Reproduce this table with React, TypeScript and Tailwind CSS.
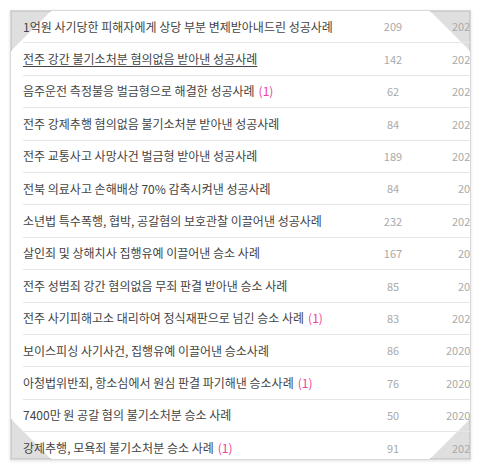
import React from "react";

type Row = {
  title: string;
  count: number;
  comments?: number;
  date: string;
  datePad: string;
  active?: boolean;
};

const rows: Row[] = [
  { title: "1억원 사기당한 피해자에게 상당 부분 변제받아내드린 성공사례", count: 209, date: "2021.03.02", datePad: "pl-[29px]" },
  { title: "전주 강간 불기소처분 혐의없음 받아낸 성공사례", count: 142, date: "2021.02.18", datePad: "pl-[29px]", active: true },
  { title: "음주운전 측정불응 벌금형으로 해결한 성공사례", count: 62, comments: 1, date: "2021.02.04", datePad: "pl-[29px]" },
  { title: "전주 강제추행 혐의없음 불기소처분 받아낸 성공사례", count: 84, date: "2021.01.21", datePad: "pl-[29px]" },
  { title: "전주 교통사고 사망사건 벌금형 받아낸 성공사례", count: 189, date: "2021.01.07", datePad: "pl-[29px]" },
  { title: "전북 의료사고 손해배상 70% 감축시켜낸 성공사례", count: 84, date: "2020.12.24", datePad: "pl-[35px]" },
  { title: "소년법 특수폭행, 협박, 공갈혐의 보호관찰 이끌어낸 성공사례", count: 232, date: "2020.12.10", datePad: "pl-[29px]" },
  { title: "살인죄 및 상해치사 집행유예 이끌어낸 승소 사례", count: 167, date: "2020.11.26", datePad: "pl-[35px]" },
  { title: "전주 성범죄 강간 혐의없음 무죄 판결 받아낸 승소 사례", count: 85, date: "2020.11.12", datePad: "pl-[35px]" },
  { title: "전주 사기피해고소 대리하여 정식재판으로 넘긴 승소 사례", count: 83, comments: 1, date: "2020.10.29", datePad: "pl-[29px]" },
  { title: "보이스피싱 사기사건, 집행유예 이끌어낸 승소사례", count: 86, date: "2020.10.15", datePad: "pl-[23px]" },
  { title: "아청법위반죄, 항소심에서 원심 판결 파기해낸 승소사례", count: 76, comments: 1, date: "2020.10.01", datePad: "pl-[23px]" },
  { title: "7400만 원 공갈 혐의 불기소처분 승소 사례", count: 50, date: "2020.09.17", datePad: "pl-[23px]" },
  { title: "강제추행, 모욕죄 불기소처분 승소 사례", count: 91, comments: 1, date: "2020.09.03", datePad: "pl-[29px]" },
];

function Corner({ pos, points, edges }: { pos: string; points: string; edges: string }) {
  return (
    <svg width="40" height="40" viewBox="0 0 40 40" className={`absolute ${pos}`}>
      <polygon points={points} fill="#dfdfdf" />
      <polyline points={edges} fill="none" stroke="#cbcbcb" strokeWidth="2" />
    </svg>
  );
}

export default function App() {
  return (
    <div className="p-[10px] bg-white" style={{ fontFamily: '"Noto Sans CJK KR", "Noto Sans", sans-serif' }}>
      <div className="relative w-[461px] h-[450px] overflow-hidden border border-[#d9d9d9] bg-white shadow-[0_1px_3px_rgba(0,0,0,0.12)]">
        <Corner pos="left-0 top-0" points="0,0 40,0 0,40" edges="0,40 0,0 40,0" />
        <Corner pos="right-0 top-0" points="0,0 40,0 40,40" edges="0,0 40,0 40,40" />
        <Corner pos="left-0 bottom-0" points="0,0 0,40 40,40" edges="0,0 0,40 40,40" />
        <Corner pos="right-0 bottom-0" points="40,0 40,40 0,40" edges="40,0 40,40 0,40" />

        <ul className="relative">
          {rows.map((r, i) => (
            <li key={i} className="pl-[12px]">
              <div
                className={`flex h-[32.4px] items-center ${
                  i < rows.length - 1 ? "border-b border-[#e6e6e6]" : ""
                }`}
              >
                <div className="w-[340px] shrink-0 whitespace-nowrap text-[12px] text-[#444]">
                  <span className={r.active ? "underline underline-offset-2" : ""}>{r.title}</span>
                  {r.comments ? <span className="ml-[4px] text-[#f0409a]">({r.comments})</span> : null}
                </div>
                <div className="w-[60px] shrink-0 text-center text-[11px] text-[#aaa]">{r.count}</div>
                <div className={`w-[120px] shrink-0 whitespace-nowrap text-[11px] text-[#aaa] ${r.datePad}`}>
                  {r.date}
                </div>
              </div>
            </li>
          ))}
        </ul>
      </div>
    </div>
  );
}
